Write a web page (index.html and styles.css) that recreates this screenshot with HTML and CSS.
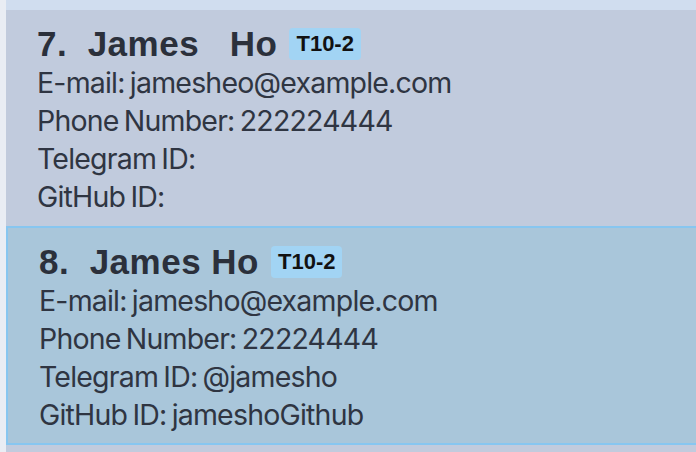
FILE: index.html
```html
<!DOCTYPE html>
<html>
<head>
<meta charset="utf-8">
<link rel="stylesheet" href="styles.css">
</head>
<body>
<div class="page">
  <div class="topstrip"></div>
  <div class="list">
    <div class="card">
      <div class="name-row"><span class="name">7.  James   Ho</span><span class="tag">T10-2</span></div>
      <div class="field">E-mail: jamesheo@example.com</div>
      <div class="field">Phone Number: 222224444</div>
      <div class="field">Telegram ID: </div>
      <div class="field">GitHub ID: </div>
    </div>
    <div class="card selected">
      <div class="name-row"><span class="name">8.  James Ho</span><span class="tag">T10-2</span></div>
      <div class="field">E-mail: jamesho@example.com</div>
      <div class="field">Phone Number: 22224444</div>
      <div class="field">Telegram ID: @jamesho</div>
      <div class="field">GitHub ID: jameshoGithub</div>
    </div>
    <div class="card rest"></div>
  </div>
</div>
</body>
</html>
```
FILE: styles.css
```css
html, body {
  margin: 0;
  padding: 0;
  width: 696px;
  height: 452px;
  overflow: hidden;
  background: #e9edf4;
}
.page {
  margin-left: 6px;
  display: flex;
  flex-direction: column;
  height: 452px;
}
.topstrip {
  flex-shrink: 0;
  height: 10px;
  background: #d0ddef;
}
.list {
  flex-shrink: 0;
  display: flex;
  flex-direction: column;
}
.card {
  flex-shrink: 0;
  box-sizing: border-box;
  background: #c1cbdd;
  padding: 14px 0 0 31px;
  height: 216px;
  color: #2f3542;
}
.card.selected {
  background: #a9c6da;
  border: 2px solid #87c6f0;
  border-right: none;
  height: 219px;
}
.card.rest {
  height: 20px;
  padding: 0;
}
.name-row {
  display: flex;
  align-items: center;
  gap: 12px;
  height: 40px;
}
.name {
  font-family: "Liberation Sans", Arial, sans-serif;
  font-weight: bold;
  font-size: 35px;
  letter-spacing: 0.5px;
  white-space: pre;
  color: #2b303b;
}
.tag {
  font-family: "Liberation Sans", Arial, sans-serif;
  font-weight: bold;
  font-size: 22px;
  background: #a2d4f4;
  color: #111;
  border-radius: 4px;
  padding: 3px 7px;
}
.field {
  font-family: Inter, Roboto, sans-serif;
  font-size: 28.5px;
  letter-spacing: -0.8px;
  word-spacing: -2px;
  line-height: 38px;
  white-space: pre;
  color: #2f3542;
}
```
